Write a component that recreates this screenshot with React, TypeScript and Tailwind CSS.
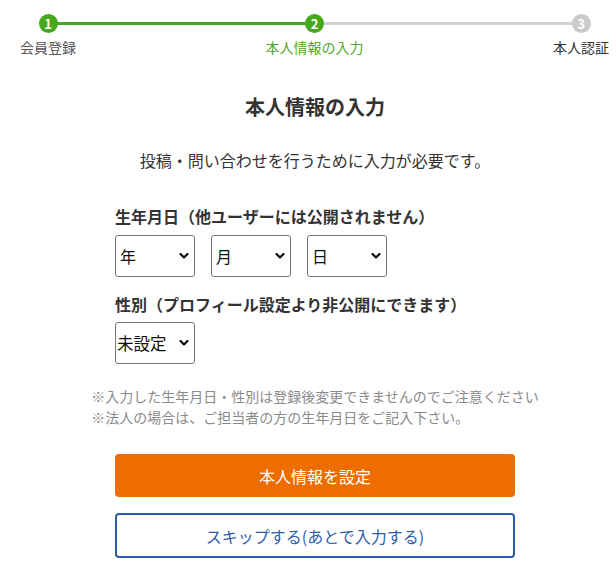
import React from "react";

const font = { fontFamily: '"Noto Sans CJK JP", "Noto Sans", sans-serif' };

function Chevron() {
  return (
    <svg
      className="pointer-events-none absolute right-[6px] top-1/2 -translate-y-1/2"
      width="10"
      height="7"
      viewBox="0 0 10 7"
    >
      <path d="M1.5 1.5 L5 5 L8.5 1.5" fill="none" stroke="#111" strokeWidth="2.2" strokeLinecap="round" strokeLinejoin="round" />
    </svg>
  );
}

function Select({ label, tight }: { label: string; tight?: boolean }) {
  return (
    <div className="relative h-[42px] w-[80px]">
      <select
        defaultValue=""
        className={`h-full w-full appearance-none rounded-[3px] border border-[#767676] bg-white ${tight ? "pl-[1px] text-[16.5px]" : "pl-[4px] text-[16px]"} leading-[20px] text-[#111] outline-none`}
        style={font}
      >
        <option value="">{label}</option>
      </select>
      <Chevron />
    </div>
  );
}

function Step({ n, label, state }: { n: number; label: string; state: "done" | "current" | "todo" }) {
  const circle = state === "todo" ? "bg-[#cbcbcb]" : "bg-[#45a81d]";
  const text = state === "current" ? "text-[#55a72b]" : state === "done" ? "text-[#555]" : "text-[#333]";
  return (
    <div className="relative z-10 flex w-[110px] shrink-0 flex-col items-center">
      <div className={`flex h-[19px] w-[19px] items-center justify-center rounded-full ${circle} text-[13px] font-bold leading-none text-white`}>
        {n}
      </div>
      <div className={`mt-[4px] whitespace-nowrap text-[14px] leading-[20px] ${text}`}>{label}</div>
    </div>
  );
}

export default function App() {
  return (
    <div className="w-[616px] overflow-hidden bg-white" style={font}>
      <div className="w-[630px]">
        {/* steps */}
        <div className="relative flex pt-[14px]">
          <div className="absolute left-[48px] top-[22px] h-[3px] w-[266px] bg-[#45a81d]" />
          <div className="absolute left-[314px] top-[22px] h-[3px] w-[267px] bg-[#d2d2d2]" />
          <div className="ml-[-7px] flex w-[643px] shrink-0 justify-between">
            <Step n={1} label="会員登録" state="done" />
            <Step n={2} label="本人情報の入力" state="current" />
            <Step n={3} label="本人認証" state="todo" />
          </div>
        </div>

        {/* title */}
        <h1 className="mt-[36px] text-center text-[20px] font-bold leading-[28px] text-[#333]">本人情報の入力</h1>
        <p className="mt-[27px] text-center text-[16px] leading-[24px] text-[#333]">
          投稿・問い合わせを行うために入力が必要です。
        </p>

        {/* form */}
        <div className="mx-auto mt-[32px] w-[400px]">
          <div className="text-[16px] font-bold leading-[24px] text-[#333]">生年月日（他ユーザーには公開されません）</div>
          <div className="mt-[7px] flex gap-[16px]">
            <Select label="年" />
            <Select label="月" />
            <Select label="日" />
          </div>
          <div className="mt-[15px] text-[16px] font-bold leading-[24px] text-[#333]">
            性別（プロフィール設定より非公開にできます）
          </div>
          <div className="mt-[6px]">
            <Select label="未設定" tight />
          </div>
        </div>

        {/* notes */}
        <div className="mx-auto mt-[22px] w-fit text-[14px] leading-[21px] text-[#8a8a8a]">
          <div>※入力した生年月日・性別は登録後変更できませんのでご注意ください</div>
          <div>※法人の場合は、ご担当者の方の生年月日をご記入下さい。</div>
        </div>

        {/* buttons */}
        <div className="mx-auto mt-[26px] flex w-[400px] flex-col gap-[16px]">
          <button className="flex h-[43px] w-full items-center justify-center rounded-[4px] bg-[#ee6d00] text-[16px] text-white">
            本人情報を設定
          </button>
          <button className="flex h-[45px] w-full items-center justify-center rounded-[4px] border-2 border-[#2b5ba8] bg-white text-[16px] text-[#2e5daa]">
            スキップする(あとで入力する)
          </button>
        </div>
      </div>
    </div>
  );
}
